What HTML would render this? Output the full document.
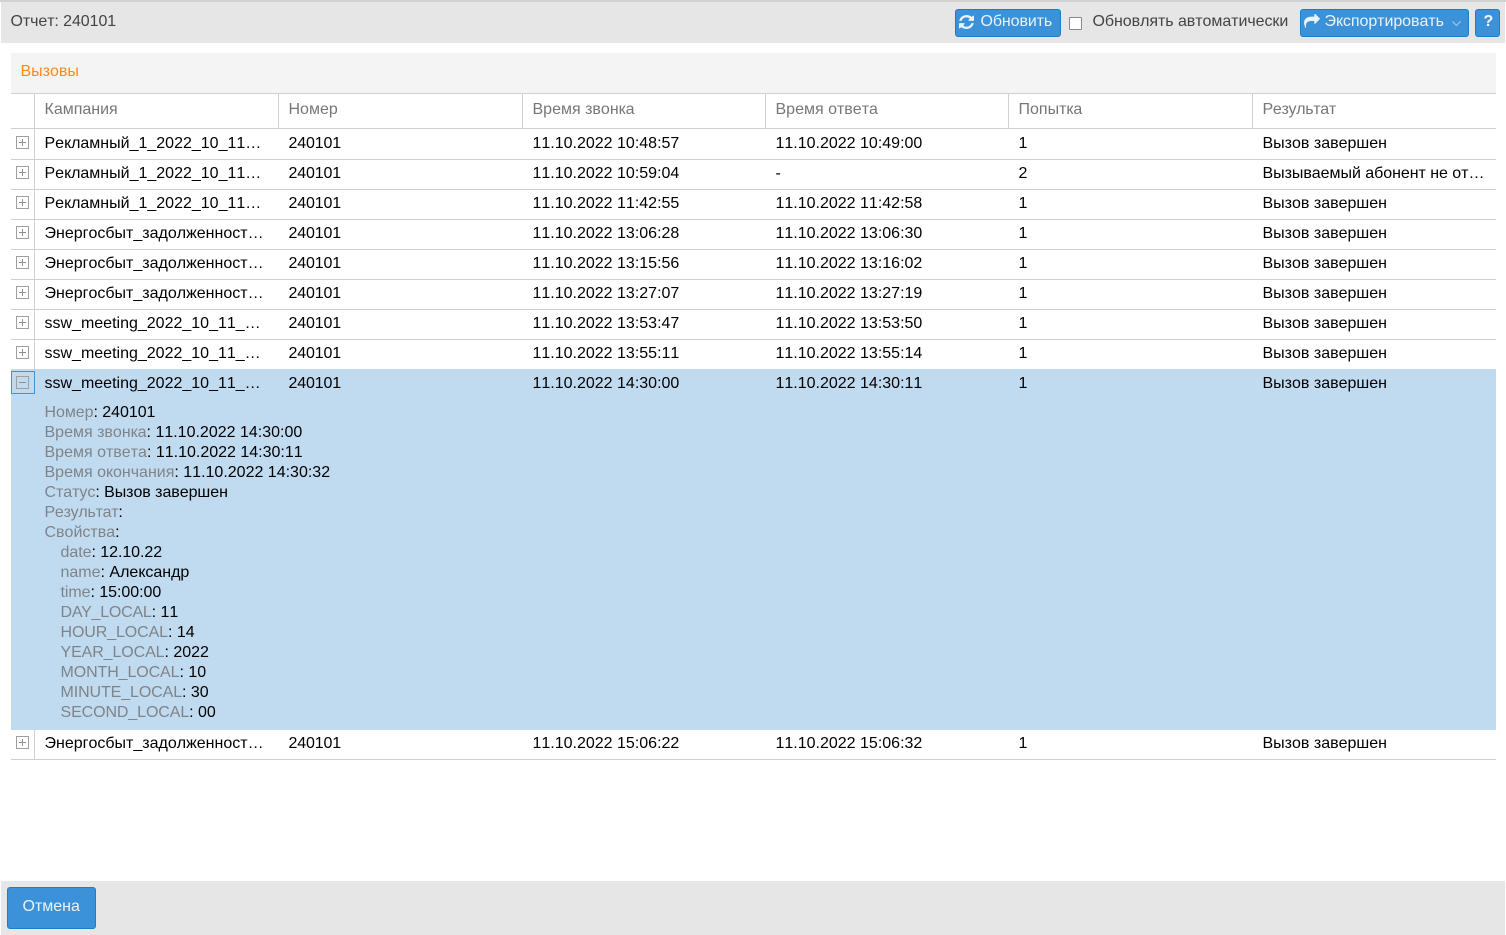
<!DOCTYPE html>
<html lang="ru">
<head>
<meta charset="utf-8">
<title>Отчет: 240101</title>
<style>
html,body{margin:0;padding:0;width:1506px;height:935px;overflow:hidden;background:#fff;font-family:"Liberation Sans","Noto Sans CJK SC",sans-serif;font-size:16px;color:#000;font-kerning:none}
div,span.a{position:absolute;white-space:nowrap}
.t{line-height:20px;height:20px;margin-top:1px;margin-left:.5px}
.c1,.c2,.c3,.c4,.c5,.c6{margin-top:2px}
.t.h{color:#777;top:99px;margin-top:1px}
.c2:not(.h){letter-spacing:-.15px}
.btn{background:#3b92d8;border:1px solid #1b7ec8;border-radius:3px;color:#e8f3fb;box-sizing:border-box}
.hr{left:11px;width:1485px;height:1px;background:#d0d0d0}
.v{width:1px;background:#d0d0d0}
.ic{left:16px;width:11px;height:11px;border:1px solid #a0a0a0;margin-top:-1px}
.ic:before{content:"";position:absolute;left:2px;top:5px;width:7px;height:1px;background:#909090}
.ic.p:after{content:"";position:absolute;left:5px;top:2px;width:1px;height:7px;background:#909090}
.c1{left:44px}.c2{left:288px}.c3{left:532px}.c4{left:775px}.c5{left:1018px}.c6{left:1262px}
.d{line-height:20px;height:20px;margin-top:2px;margin-left:.5px}
.d i{font-style:normal;color:#7f8488}
.d i.k{font-kerning:normal;letter-spacing:-.1px}
.d.n{letter-spacing:-.05px}
</style>
</head>
<body>
<div style="left:0;top:0;width:1506px;height:2px;background:#d2d2d2"></div>
<div style="left:1px;top:2px;width:1504px;height:41px;background:#e6e6e6"></div>
<div class="t" style="left:10px;top:11px;color:#444;letter-spacing:-.08px">Отчет: 240101</div>

<div class="btn" style="left:955px;top:9px;width:106px;height:28px"></div>
<svg style="position:absolute;left:959px;top:15px" width="15" height="14" viewBox="0 0 1536 1536" preserveAspectRatio="none"><path fill="#e8f3fb" d="M1511 928q0 5-1 7-64 268-268 434.5t-478 166.5q-146 0-282.5-55t-243.5-157l-129 129q-19 19-45 19t-45-19-19-45v-448q0-26 19-45t45-19h448q26 0 45 19t19 45-19 45l-137 137q71 66 161 102t187 36q134 0 250-65t186-179q11-17 53-117 8-23 30-23h192q13 0 22.5 9.5t9.5 22.5zm25-800v448q0 26-19 45t-45 19h-448q-26 0-45-19t-19-45 19-45l138-138q-148-137-349-137-134 0-250 65t-186 179q-11 17-53 117-8 23-30 23h-199q-13 0-22.5-9.5t-9.5-22.5v-7q65-268 270-434.5t480-166.5q146 0 284 55.5t245 156.5l130-129q19-19 45-19t45 19 19 45z"/></svg>
<div class="t" style="left:980px;top:11px;color:#e8f3fb;letter-spacing:-.1px">Обновить</div>

<div style="left:1069px;top:17px;width:11px;height:11px;border:1px solid #8a8a8a;background:#fff;border-radius:1px"></div>
<div class="t" style="left:1092px;top:11px;color:#444;letter-spacing:-.05px">Обновлять автоматически</div>

<div class="btn" style="left:1300px;top:9px;width:169px;height:28px"></div>
<svg style="position:absolute;left:1304px;top:14px" width="16" height="14" viewBox="0 128 1792 1536"><path fill="#e8f3fb" d="M1792 640q0 26-19 45l-512 512q-19 19-45 19t-45-19-19-45v-256h-224q-98 0-175.5 6t-154 21.5-133 42.5-105.5 69.5-79 103.5-47 144-16 192q0 55 5 123 0 6 2.5 23.5t2.5 26.5q0 15-8.5 25t-23.5 10q-16 0-28-17-7-9-13-22t-13.5-30-10.5-24q-127-285-127-451 0-199 53-333 162-403 875-403h224v-256q0-26 19-45t45-19 45 19l512 512q19 19 19 45z"/></svg>
<div class="t" style="left:1324px;top:11px;color:#e8f3fb;letter-spacing:-.05px">Экспортировать</div>
<svg style="position:absolute;left:1452px;top:21px" width="9" height="5" viewBox="0 0 9 5"><path d="M.5 .5L4.5 4.5L8.5 .5" fill="none" stroke="#a8cdea" stroke-width="1"/></svg>

<div class="btn" style="left:1475px;top:9px;width:25px;height:28px"></div>
<div class="t" style="left:1483px;top:11px;color:#f4f9fd;font-weight:bold">?</div>

<div style="left:11px;top:53px;width:1485px;height:40px;background:#f4f4f4"></div>
<div class="t" style="left:20px;top:61px;color:#ff8a10">Вызовы</div>
<div class="hr" style="top:93px"></div>

<div class="v" style="left:34px;top:94px;height:275px"></div>
<div class="v" style="left:34px;top:730px;height:29px"></div>
<div class="v" style="left:278px;top:94px;height:34px"></div>
<div class="v" style="left:522px;top:94px;height:34px"></div>
<div class="v" style="left:765px;top:94px;height:34px"></div>
<div class="v" style="left:1008px;top:94px;height:34px"></div>
<div class="v" style="left:1252px;top:94px;height:34px"></div>

<div class="t h c1">Кампания</div>
<div class="t h c2">Номер</div>
<div class="t h c3">Время звонка</div>
<div class="t h c4">Время ответа</div>
<div class="t h c5">Попытка</div>
<div class="t h c6" style="letter-spacing:-.3px">Результат</div>
<div class="hr" style="top:128px"></div>

<!-- row 1 -->
<div class="ic p" style="top:137px"></div>
<div class="t c1" style="top:132px">Рекламный_1_2022_10_11…</div><div class="t c2" style="top:132px">240101</div><div class="t c3" style="top:132px">11.10.2022 10:48:57</div><div class="t c4" style="top:132px">11.10.2022 10:49:00</div><div class="t c5" style="top:132px">1</div><div class="t c6" style="top:132px">Вызов завершен</div>
<div class="hr" style="top:159px"></div>
<!-- row 2 -->
<div class="ic p" style="top:167px"></div>
<div class="t c1" style="top:162px">Рекламный_1_2022_10_11…</div><div class="t c2" style="top:162px">240101</div><div class="t c3" style="top:162px">11.10.2022 10:59:04</div><div class="t c4" style="top:162px">-</div><div class="t c5" style="top:162px">2</div><div class="t c6" style="top:162px;letter-spacing:-.04px">Вызываемый абонент не от…</div>
<div class="hr" style="top:189px"></div>
<!-- row 3 -->
<div class="ic p" style="top:197px"></div>
<div class="t c1" style="top:192px">Рекламный_1_2022_10_11…</div><div class="t c2" style="top:192px">240101</div><div class="t c3" style="top:192px">11.10.2022 11:42:55</div><div class="t c4" style="top:192px">11.10.2022 11:42:58</div><div class="t c5" style="top:192px">1</div><div class="t c6" style="top:192px">Вызов завершен</div>
<div class="hr" style="top:219px"></div>
<!-- row 4 -->
<div class="ic p" style="top:227px"></div>
<div class="t c1" style="top:222px">Энергосбыт_задолженност…</div><div class="t c2" style="top:222px">240101</div><div class="t c3" style="top:222px">11.10.2022 13:06:28</div><div class="t c4" style="top:222px">11.10.2022 13:06:30</div><div class="t c5" style="top:222px">1</div><div class="t c6" style="top:222px">Вызов завершен</div>
<div class="hr" style="top:249px"></div>
<!-- row 5 -->
<div class="ic p" style="top:257px"></div>
<div class="t c1" style="top:252px">Энергосбыт_задолженност…</div><div class="t c2" style="top:252px">240101</div><div class="t c3" style="top:252px">11.10.2022 13:15:56</div><div class="t c4" style="top:252px">11.10.2022 13:16:02</div><div class="t c5" style="top:252px">1</div><div class="t c6" style="top:252px">Вызов завершен</div>
<div class="hr" style="top:279px"></div>
<!-- row 6 -->
<div class="ic p" style="top:287px"></div>
<div class="t c1" style="top:282px">Энергосбыт_задолженност…</div><div class="t c2" style="top:282px">240101</div><div class="t c3" style="top:282px">11.10.2022 13:27:07</div><div class="t c4" style="top:282px">11.10.2022 13:27:19</div><div class="t c5" style="top:282px">1</div><div class="t c6" style="top:282px">Вызов завершен</div>
<div class="hr" style="top:309px"></div>
<!-- row 7 -->
<div class="ic p" style="top:317px"></div>
<div class="t c1" style="top:312px">ssw_meeting_2022_10_11_…</div><div class="t c2" style="top:312px">240101</div><div class="t c3" style="top:312px">11.10.2022 13:53:47</div><div class="t c4" style="top:312px">11.10.2022 13:53:50</div><div class="t c5" style="top:312px">1</div><div class="t c6" style="top:312px">Вызов завершен</div>
<div class="hr" style="top:339px"></div>
<!-- row 8 -->
<div class="ic p" style="top:347px"></div>
<div class="t c1" style="top:342px">ssw_meeting_2022_10_11_…</div><div class="t c2" style="top:342px">240101</div><div class="t c3" style="top:342px">11.10.2022 13:55:11</div><div class="t c4" style="top:342px">11.10.2022 13:55:14</div><div class="t c5" style="top:342px">1</div><div class="t c6" style="top:342px">Вызов завершен</div>

<!-- selected row -->
<div style="left:11px;top:369px;width:1485px;height:361px;background:#c0daf0"></div>
<div style="left:11px;top:371px;width:22px;height:21px;border:1px solid #4a90c8"></div>
<div class="ic" style="top:377px"></div>
<div class="t c1" style="top:372px">ssw_meeting_2022_10_11_…</div><div class="t c2" style="top:372px">240101</div><div class="t c3" style="top:372px">11.10.2022 14:30:00</div><div class="t c4" style="top:372px">11.10.2022 14:30:11</div><div class="t c5" style="top:372px">1</div><div class="t c6" style="top:372px">Вызов завершен</div>

<div class="d n" style="left:44px;top:401px"><i>Номер</i>: 240101</div>
<div class="d" style="left:44px;top:421px"><i>Время звонка</i>: 11.10.2022 14:30:00</div>
<div class="d" style="left:44px;top:441px"><i>Время ответа</i>: 11.10.2022 14:30:11</div>
<div class="d" style="left:44px;top:461px"><i>Время окончания</i>: 11.10.2022 14:30:32</div>
<div class="d n" style="left:44px;top:481px"><i>Статус</i>: Вызов завершен</div>
<div class="d" style="left:44px;top:501px;letter-spacing:-.25px"><i>Результат</i>:</div>
<div class="d" style="left:44px;top:521px"><i>Свойства</i>:</div>
<div class="d n" style="left:60px;top:541px"><i>date</i>: 12.10.22</div>
<div class="d" style="left:60px;top:561px"><i>name</i>: Александр</div>
<div class="d n" style="left:60px;top:581px"><i>time</i>: 15:00:00</div>
<div class="d" style="left:60px;top:601px"><i class="k" style="letter-spacing:-.22px">DAY_LOCAL</i>: 11</div>
<div class="d" style="left:60px;top:621px"><i class="k">HOUR_LOCAL</i>: 14</div>
<div class="d" style="left:60px;top:641px"><i class="k">YEAR_LOCAL</i>: 2022</div>
<div class="d" style="left:60px;top:661px"><i class="k">MONTH_LOCAL</i>: 10</div>
<div class="d" style="left:60px;top:681px"><i class="k">MINUTE_LOCAL</i>: 30</div>
<div class="d" style="left:60px;top:701px"><i class="k">SECOND_LOCAL</i>: 00</div>

<!-- last row -->
<div class="ic p" style="top:737px"></div>
<div class="t c1" style="top:732px">Энергосбыт_задолженност…</div><div class="t c2" style="top:732px">240101</div><div class="t c3" style="top:732px">11.10.2022 15:06:22</div><div class="t c4" style="top:732px">11.10.2022 15:06:32</div><div class="t c5" style="top:732px">1</div><div class="t c6" style="top:732px">Вызов завершен</div>
<div class="hr" style="top:759px"></div>

<!-- footer -->
<div style="left:1px;top:881px;width:1504px;height:54px;background:#e6e6e6"></div>
<div class="btn" style="left:7px;top:887px;width:89px;height:42px"></div>
<div class="t" style="left:22px;top:896px;color:#e8f3fb">Отмена</div>
</body>
</html>
